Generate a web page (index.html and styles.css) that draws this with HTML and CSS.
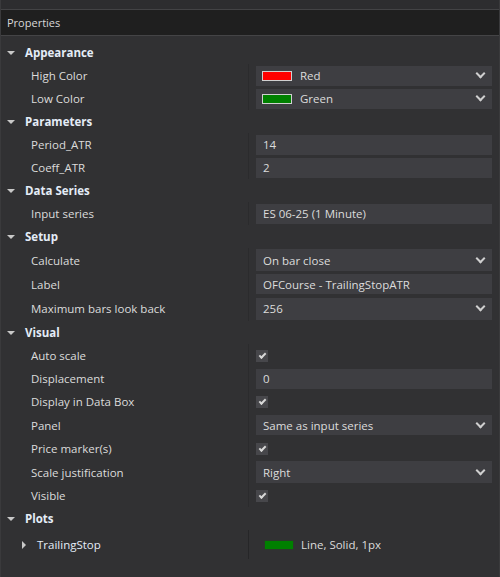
FILE: index.html
```html
<!DOCTYPE html>
<html>
<head>
<meta charset="utf-8">
<link rel="stylesheet" href="styles.css">
</head>
<body>
<div class="window">
  <div class="topstrip"></div>
  <div class="header">Properties</div>
  <div class="grid">
    <div class="cat"><span class="tri-down"></span>Appearance</div>
    <div class="row"><div class="name">High Color</div><div class="val"><div class="box select"><span class="swatch red"></span><span>Red</span><span class="chev"></span></div></div></div>
    <div class="row"><div class="name">Low Color</div><div class="val"><div class="box select"><span class="swatch green"></span><span>Green</span><span class="chev"></span></div></div></div>

    <div class="cat"><span class="tri-down"></span>Parameters</div>
    <div class="row"><div class="name">Period_ATR</div><div class="val"><div class="box">14</div></div></div>
    <div class="row"><div class="name">Coeff_ATR</div><div class="val"><div class="box">2</div></div></div>

    <div class="cat"><span class="tri-down"></span>Data Series</div>
    <div class="row"><div class="name">Input series</div><div class="val"><div class="box">ES 06-25 (1 Minute)</div></div></div>

    <div class="cat"><span class="tri-down"></span>Setup</div>
    <div class="row tall"><div class="name">Calculate</div><div class="val"><div class="box select big">On bar close<span class="chev"></span></div></div></div>
    <div class="row tall"><div class="name">Label</div><div class="val"><div class="box">OFCourse - TrailingStopATR</div></div></div>
    <div class="row taller"><div class="name">Maximum bars look back</div><div class="val"><div class="box select big">256<span class="chev"></span></div></div></div>

    <div class="cat"><span class="tri-down"></span>Visual</div>
    <div class="row"><div class="name">Auto scale</div><div class="val"><span class="check"></span></div></div>
    <div class="row"><div class="name">Displacement</div><div class="val"><div class="box">0</div></div></div>
    <div class="row"><div class="name">Display in Data Box</div><div class="val"><span class="check"></span></div></div>
    <div class="row tall"><div class="name">Panel</div><div class="val"><div class="box select">Same as input series<span class="chev"></span></div></div></div>
    <div class="row"><div class="name">Price marker(s)</div><div class="val"><span class="check"></span></div></div>
    <div class="row tall"><div class="name">Scale justification</div><div class="val"><div class="box select big">Right<span class="chev"></span></div></div></div>
    <div class="row"><div class="name">Visible</div><div class="val"><span class="check"></span></div></div>

    <div class="cat"><span class="tri-down"></span>Plots</div>
    <div class="row plot"><div class="name plotname"><span class="tri-right"></span>TrailingStop</div><div class="val plotval"><span class="swatch plotgreen"></span><span>Line, Solid, 1px</span></div></div>
  </div>
  <div class="bottom"></div>
</div>
</body>
</html>
```

FILE: styles.css
```css
html, body {
  margin: 0;
  padding: 0;
  background: #2c2c2e;
}
body {
  font-family: "Open Sans", "Noto Sans", sans-serif;
  font-size: 11.5px;
  color: #dcdcdc;
}
.window {
  width: 500px;
  height: 577px;
  display: flex;
  flex-direction: column;
  background: #313133;
  box-sizing: border-box;
  border-left: 1px solid #3a3a3c;
  border-right: 1px solid #3a3a3c;
}
.topstrip {
  height: 9px;
  background: #2d2d2f;
  border-bottom: 1px solid #434345;
}
.header {
  height: 25px;
  line-height: 25px;
  background: #1f1f1f;
  border-bottom: 1px solid #444446;
  padding-left: 6px;
  color: #d8d8d8;
  font-size: 11px;
}
.grid {
  padding-top: 5px;
  display: flex;
  flex-direction: column;
}
.cat {
  height: 23px;
  display: flex;
  align-items: center;
  font-weight: bold;
  color: #e4ecf7;
  padding-left: 6px;
}
.tri-down {
  width: 0;
  height: 0;
  border-left: 4px solid transparent;
  border-right: 4px solid transparent;
  border-top: 4px solid #c8c8c8;
  margin-right: 10px;
  margin-top: 1px;
}
.tri-right {
  width: 0;
  height: 0;
  border-top: 4px solid transparent;
  border-bottom: 4px solid transparent;
  border-left: 4px solid #c8c8c8;
  margin-right: 11px;
}
.row {
  height: 23px;
  display: grid;
  grid-template-columns: 248px 1fr;
}
.row.tall {
  height: 24px;
}
.row.taller {
  height: 25px;
}
.name {
  display: flex;
  align-items: center;
  padding-left: 30px;
  border-right: 1px solid #2b2b2d;
}
.val {
  display: flex;
  align-items: center;
  padding-left: 7px;
  padding-right: 7px;
}
.box {
  flex: 1;
  height: 20px;
  background: #3e3e42;
  display: flex;
  align-items: center;
  padding-left: 7px;
  padding-right: 6px;
  box-sizing: border-box;
}
.box.big {
  height: 22px;
}
.select {
  position: relative;
}
.chev {
  margin-left: auto;
  width: 5px;
  height: 5px;
  border-right: 2px solid #cfcfcf;
  border-bottom: 2px solid #cfcfcf;
  transform: rotate(45deg);
  margin-top: -4px;
  margin-right: 2px;
}
.swatch {
  width: 28px;
  height: 8px;
  border: 1px solid #d0d0d0;
  margin-left: -1px;
  margin-right: 8px;
}
.red { background: #ff0000; }
.green { background: #008000; }
.check {
  width: 12px;
  height: 12px;
  background: #47474b;
  position: relative;
}
.check::after {
  content: "";
  position: absolute;
  left: 3px;
  top: 3px;
  width: 5px;
  height: 2px;
  border-left: 2px solid #d8d8d8;
  border-bottom: 2px solid #d8d8d8;
  transform: rotate(-45deg);
}
.row.plot {
  height: 29px;
}
.plotname {
  padding-left: 21px;
  color: #e4ecf7;
  border-right: 1px solid #262628;
}
.plotval {
  padding-left: 15px;
}
.plotgreen {
  background: #008000;
  border: 1px solid #2a3a2a;
  width: 28px;
  height: 8px;
  margin-left: 0;
  margin-right: 7px;
}
.bottom {
  flex: 1;
  background: #313133;
}
```
